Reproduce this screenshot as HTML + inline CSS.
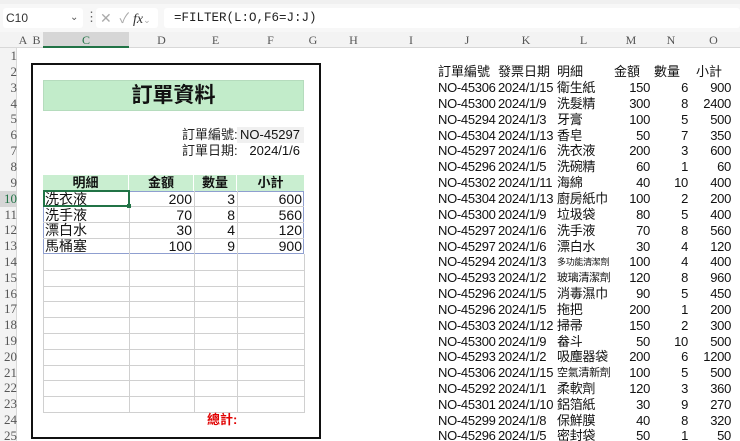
<!DOCTYPE html>
<html><head><meta charset="utf-8"><style>
*{margin:0;padding:0;box-sizing:border-box}
body{width:740px;height:441px;overflow:hidden;background:#fff;position:relative;font-family:"Liberation Sans","Noto Sans CJK TC",sans-serif;font-size:13px;color:#111}
.a{position:absolute;white-space:nowrap}
.rh{position:absolute;left:0;width:17px;height:16px;font-family:"Liberation Serif",serif;font-size:13px;color:#555;text-align:right;line-height:16px}
.ch{position:absolute;top:32px;height:16px;font-family:"Liberation Serif",serif;font-size:12px;color:#555;text-align:center;line-height:16px}
.r{position:absolute;height:16px;line-height:16px;white-space:nowrap}
.t{position:absolute;left:0;width:740px;height:15.85px;line-height:16px;white-space:nowrap}.t span{position:absolute}.j{left:438px}.k{left:498px}.l{left:557px}.m{right:90px}.n{right:52px}.o{right:9px}
</style></head><body>
<div class="a" style="left:0;top:0;width:740px;height:4px;background:#f0f0f0"></div>
<div class="a" style="left:0;top:4px;width:740px;height:28px;background:#f7f7f7"></div>
<div class="a" style="left:3px;top:8px;width:80px;height:20px;background:#fff;border-radius:3px;font-size:12px;line-height:20px;padding-left:3px;color:#333">C10<span style="position:absolute;left:67px;font-size:10px;color:#555">&#8964;</span></div>
<div class="a" style="left:85px;top:9px;font-size:13px;color:#666">&#8942;</div>
<div class="a" style="left:96px;top:8px;width:62px;height:20px;background:#fff;border-radius:3px;font-size:14px;line-height:20px;color:#aaa;padding-left:4px">&#10005;&nbsp;&nbsp;&#10003;&nbsp;<i style="font-family:'Liberation Serif',serif;color:#333">fx</i><span style="font-size:9px">&#8964;</span></div>
<div class="a" style="left:164px;top:8px;width:576px;height:20px;background:#fff;border-radius:3px;font-family:'Liberation Mono',monospace;font-size:12.5px;line-height:20px;padding-left:10px;color:#222">=FILTER(L:O,F6=J:J)</div>
<div class="a" style="left:0;top:32px;width:740px;height:16px;background:#f3f3f3;border-bottom:1px solid #d8d8d8"></div>
<div class="a" style="left:43px;top:32px;width:86px;height:16px;background:#d6d6d6;border-bottom:2px solid #217346"></div>
<div class="ch" style="left:16px;width:14px">A</div>
<div class="ch" style="left:30px;width:13px">B</div>
<div class="ch" style="left:43px;width:86px;color:#217346">C</div>
<div class="ch" style="left:129px;width:65px">D</div>
<div class="ch" style="left:194px;width:43px">E</div>
<div class="ch" style="left:237px;width:67px">F</div>
<div class="ch" style="left:304px;width:18px">G</div>
<div class="ch" style="left:322px;width:63px">H</div>
<div class="ch" style="left:385px;width:52px">I</div>
<div class="ch" style="left:437px;width:60px">J</div>
<div class="ch" style="left:497px;width:58px">K</div>
<div class="ch" style="left:555px;width:57px">L</div>
<div class="ch" style="left:612px;width:38px">M</div>
<div class="ch" style="left:650px;width:42px">N</div>
<div class="ch" style="left:692px;width:43px">O</div>
<div class="a" style="left:0;top:48px;width:17px;height:393px;background:#f3f3f3;border-right:1px solid #d8d8d8"></div>
<div class="rh" style="top:48px">1</div><div class="rh" style="top:64px">2</div><div class="rh" style="top:80px">3</div><div class="rh" style="top:96px">4</div><div class="rh" style="top:111px">5</div><div class="rh" style="top:127px">6</div><div class="rh" style="top:143px">7</div><div class="rh" style="top:159px">8</div><div class="rh" style="top:175px">9</div><div class="rh" style="top:191px;color:#217346;background:#d6d6d6">10</div><div class="rh" style="top:207px">11</div><div class="rh" style="top:222px">12</div><div class="rh" style="top:238px">13</div><div class="rh" style="top:254px">14</div><div class="rh" style="top:270px">15</div><div class="rh" style="top:286px">16</div><div class="rh" style="top:301px">17</div><div class="rh" style="top:317px">18</div><div class="rh" style="top:333px">19</div><div class="rh" style="top:349px">20</div><div class="rh" style="top:365px">21</div><div class="rh" style="top:380px">22</div><div class="rh" style="top:396px">23</div><div class="rh" style="top:412px">24</div><div class="rh" style="top:428px;height:13px;overflow:hidden">25</div>
<div class="a" style="left:31px;top:63px;width:290px;height:376px;border:2px solid #111"></div>
<div class="a" style="left:43px;top:80px;width:261px;height:31px;background:#c2ecca;border:1px solid #b5dcbd;font-size:21px;font-weight:bold;text-align:center;line-height:30px">訂單資料</div>
<div class="a" style="left:182px;top:127px;line-height:16px;color:#222">訂單編號:</div>
<div class="a" style="left:237px;top:127px;width:67px;height:16px;background:#f0f0f0;line-height:16px;text-align:right;padding-right:4px">NO-45297</div>
<div class="a" style="left:182px;top:143px;line-height:16px;color:#222">訂單日期:</div>
<div class="a" style="left:237px;top:143px;width:67px;line-height:16px;text-align:right;padding-right:4px">2024/1/6</div>
<div class="a" style="left:43px;top:175px;width:261px;height:16px;background:#c9eed0"></div>
<div class="r" style="left:43px;top:175px;width:86px;text-align:center;font-weight:bold;border-right:1px solid #fff">明細</div>
<div class="r" style="left:129px;top:175px;width:65px;text-align:center;font-weight:bold;border-right:1px solid #fff">金額</div>
<div class="r" style="left:194px;top:175px;width:43px;text-align:center;font-weight:bold;border-right:1px solid #fff">數量</div>
<div class="r" style="left:237px;top:175px;width:67px;text-align:center;font-weight:bold">小計</div>
<div class="a" style="left:43px;top:191px;width:261px;height:63px;border:1px solid #8f9fd0"></div>
<div class="a" style="left:129px;top:191px;width:1px;height:222px;background:#d0d0d0"></div>
<div class="a" style="left:194px;top:191px;width:1px;height:222px;background:#d0d0d0"></div>
<div class="a" style="left:237px;top:191px;width:1px;height:222px;background:#d0d0d0"></div>
<div class="a" style="left:43px;top:254px;width:1px;height:159px;background:#d0d0d0"></div>
<div class="a" style="left:304px;top:254px;width:1px;height:159px;background:#d0d0d0"></div>
<div class="a" style="left:43px;top:206px;width:261px;height:1px;background:#d0d0d0"></div>
<div class="a" style="left:43px;top:222px;width:261px;height:1px;background:#d0d0d0"></div>
<div class="a" style="left:43px;top:238px;width:261px;height:1px;background:#d0d0d0"></div>
<div class="a" style="left:43px;top:270px;width:261px;height:1px;background:#d0d0d0"></div>
<div class="a" style="left:43px;top:286px;width:261px;height:1px;background:#d0d0d0"></div>
<div class="a" style="left:43px;top:301px;width:261px;height:1px;background:#d0d0d0"></div>
<div class="a" style="left:43px;top:317px;width:261px;height:1px;background:#d0d0d0"></div>
<div class="a" style="left:43px;top:333px;width:261px;height:1px;background:#d0d0d0"></div>
<div class="a" style="left:43px;top:349px;width:261px;height:1px;background:#d0d0d0"></div>
<div class="a" style="left:43px;top:365px;width:261px;height:1px;background:#d0d0d0"></div>
<div class="a" style="left:43px;top:380px;width:261px;height:1px;background:#d0d0d0"></div>
<div class="a" style="left:43px;top:396px;width:261px;height:1px;background:#d0d0d0"></div>
<div class="a" style="left:43px;top:412px;width:261px;height:1px;background:#d0d0d0"></div>
<div class="a" style="left:43px;top:190px;width:87px;height:17px;border:2px solid #217346"></div>
<div class="a" style="left:127px;top:204px;width:4px;height:4px;background:#217346"></div>
<div class="r" style="left:45px;top:191px;font-size:14px">洗衣液</div><div class="r" style="left:129px;top:191px;width:63px;text-align:right;font-size:14px">200</div><div class="r" style="left:194px;top:191px;width:41px;text-align:right;font-size:14px">3</div><div class="r" style="left:237px;top:191px;width:65px;text-align:right;font-size:14px">600</div>
<div class="r" style="left:45px;top:207px;font-size:14px">洗手液</div><div class="r" style="left:129px;top:207px;width:63px;text-align:right;font-size:14px">70</div><div class="r" style="left:194px;top:207px;width:41px;text-align:right;font-size:14px">8</div><div class="r" style="left:237px;top:207px;width:65px;text-align:right;font-size:14px">560</div>
<div class="r" style="left:45px;top:222px;font-size:14px">漂白水</div><div class="r" style="left:129px;top:222px;width:63px;text-align:right;font-size:14px">30</div><div class="r" style="left:194px;top:222px;width:41px;text-align:right;font-size:14px">4</div><div class="r" style="left:237px;top:222px;width:65px;text-align:right;font-size:14px">120</div>
<div class="r" style="left:45px;top:238px;font-size:14px">馬桶塞</div><div class="r" style="left:129px;top:238px;width:63px;text-align:right;font-size:14px">100</div><div class="r" style="left:194px;top:238px;width:41px;text-align:right;font-size:14px">9</div><div class="r" style="left:237px;top:238px;width:65px;text-align:right;font-size:14px">900</div>
<div class="r" style="left:207px;top:412px;color:#e00000;font-weight:bold">總計:</div>
<div class="r" style="left:438px;top:64px">訂單編號</div><div class="r" style="left:498px;top:64px">發票日期</div><div class="r" style="left:557px;top:64px">明細</div><div class="r" style="left:614px;top:64px">金額</div><div class="r" style="left:654px;top:64px">數量</div><div class="r" style="left:696px;top:64px">小計</div>
<div style="position:absolute;left:0;top:0;width:740px;height:441px;overflow:hidden;font-size:13px;letter-spacing:-0.3px">
<div style="position:absolute;left:0;top:80px">
<div class="t" style="top:0"><span class="j">NO-45306</span><span class="k">2024/1/15</span><span class="l">衛生紙</span><span class="m">150</span><span class="n">6</span><span class="o">900</span></div>
<div class="t" style="top:15.85px"><span class="j">NO-45300</span><span class="k">2024/1/9</span><span class="l">洗髮精</span><span class="m">300</span><span class="n">8</span><span class="o">2400</span></div>
<div class="t" style="top:31.7px"><span class="j">NO-45294</span><span class="k">2024/1/3</span><span class="l">牙膏</span><span class="m">100</span><span class="n">5</span><span class="o">500</span></div>
<div class="t" style="top:47.55px"><span class="j">NO-45304</span><span class="k">2024/1/13</span><span class="l">香皂</span><span class="m">50</span><span class="n">7</span><span class="o">350</span></div>
<div class="t" style="top:63.4px"><span class="j">NO-45297</span><span class="k">2024/1/6</span><span class="l">洗衣液</span><span class="m">200</span><span class="n">3</span><span class="o">600</span></div>
<div class="t" style="top:79.25px"><span class="j">NO-45296</span><span class="k">2024/1/5</span><span class="l">洗碗精</span><span class="m">60</span><span class="n">1</span><span class="o">60</span></div>
<div class="t" style="top:95.1px"><span class="j">NO-45302</span><span class="k">2024/1/11</span><span class="l">海綿</span><span class="m">40</span><span class="n">10</span><span class="o">400</span></div>
<div class="t" style="top:110.95px"><span class="j">NO-45304</span><span class="k">2024/1/13</span><span class="l">廚房紙巾</span><span class="m">100</span><span class="n">2</span><span class="o">200</span></div>
<div class="t" style="top:126.8px"><span class="j">NO-45300</span><span class="k">2024/1/9</span><span class="l">垃圾袋</span><span class="m">80</span><span class="n">5</span><span class="o">400</span></div>
<div class="t" style="top:142.65px"><span class="j">NO-45297</span><span class="k">2024/1/6</span><span class="l">洗手液</span><span class="m">70</span><span class="n">8</span><span class="o">560</span></div>
<div class="t" style="top:158.5px"><span class="j">NO-45297</span><span class="k">2024/1/6</span><span class="l">漂白水</span><span class="m">30</span><span class="n">4</span><span class="o">120</span></div>
<div class="t" style="top:174.35px"><span class="j">NO-45294</span><span class="k">2024/1/3</span><span class="l" style="font-size:9px">多功能清潔劑</span><span class="m">100</span><span class="n">4</span><span class="o">400</span></div>
<div class="t" style="top:190.2px"><span class="j">NO-45293</span><span class="k">2024/1/2</span><span class="l" style="font-size:11px">玻璃清潔劑</span><span class="m">120</span><span class="n">8</span><span class="o">960</span></div>
<div class="t" style="top:206.05px"><span class="j">NO-45296</span><span class="k">2024/1/5</span><span class="l">消毒濕巾</span><span class="m">90</span><span class="n">5</span><span class="o">450</span></div>
<div class="t" style="top:221.9px"><span class="j">NO-45296</span><span class="k">2024/1/5</span><span class="l">拖把</span><span class="m">200</span><span class="n">1</span><span class="o">200</span></div>
<div class="t" style="top:237.75px"><span class="j">NO-45303</span><span class="k">2024/1/12</span><span class="l">掃帚</span><span class="m">150</span><span class="n">2</span><span class="o">300</span></div>
<div class="t" style="top:253.6px"><span class="j">NO-45300</span><span class="k">2024/1/9</span><span class="l">畚斗</span><span class="m">50</span><span class="n">10</span><span class="o">500</span></div>
<div class="t" style="top:269.45px"><span class="j">NO-45293</span><span class="k">2024/1/2</span><span class="l">吸塵器袋</span><span class="m">200</span><span class="n">6</span><span class="o">1200</span></div>
<div class="t" style="top:285.3px"><span class="j">NO-45306</span><span class="k">2024/1/15</span><span class="l" style="font-size:11px">空氣清新劑</span><span class="m">100</span><span class="n">5</span><span class="o">500</span></div>
<div class="t" style="top:301.15px"><span class="j">NO-45292</span><span class="k">2024/1/1</span><span class="l">柔軟劑</span><span class="m">120</span><span class="n">3</span><span class="o">360</span></div>
<div class="t" style="top:317px"><span class="j">NO-45301</span><span class="k">2024/1/10</span><span class="l">鋁箔紙</span><span class="m">30</span><span class="n">9</span><span class="o">270</span></div>
<div class="t" style="top:332.85px"><span class="j">NO-45299</span><span class="k">2024/1/8</span><span class="l">保鮮膜</span><span class="m">40</span><span class="n">8</span><span class="o">320</span></div>
<div class="t" style="top:348px"><span class="j">NO-45296</span><span class="k">2024/1/5</span><span class="l">密封袋</span><span class="m">50</span><span class="n">1</span><span class="o">50</span></div>
</div>
</div>
</body></html>
